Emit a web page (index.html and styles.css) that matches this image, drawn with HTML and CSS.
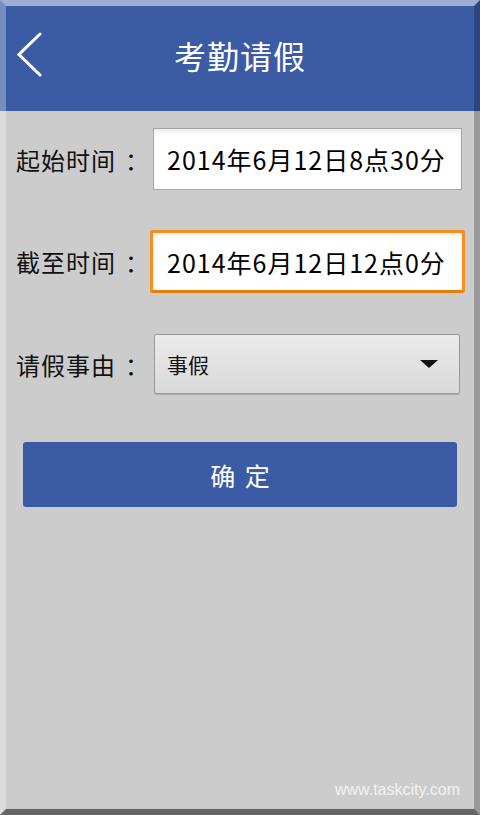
FILE: index.html
```html
<!DOCTYPE html>
<html lang="zh-CN">
<head>
<meta charset="utf-8">
<title>考勤请假</title>
<link rel="stylesheet" href="styles.css">
</head>
<body>
<div class="screen">
  <header class="header">
    <svg class="back" width="30" height="48" viewBox="0 0 30 48">
      <polyline points="23,3 2,23.5 23,44" fill="none" stroke="#fff" stroke-width="3" stroke-linecap="round" stroke-linejoin="miter"/>
    </svg>
    <h1 class="title">考勤请假</h1>
  </header>
  <main class="form">
    <div class="row row-start">
      <span class="label">起始时间<span class="colon">：</span></span>
      <div class="field field-plain">2014年6月12日8点30分</div>
    </div>
    <div class="row row-end">
      <span class="label">截至时间<span class="colon">：</span></span>
      <div class="field field-focus">2014年6月12日12点0分</div>
    </div>
    <div class="row row-reason">
      <span class="label">请假事由<span class="colon">：</span></span>
      <div class="select">
        <span class="select-text">事假</span>
        <span class="caret"></span>
      </div>
    </div>
    <button class="confirm">确 定</button>
  </main>
  <footer class="footer">www.taskcity.com</footer>
  <div class="frame"></div>
</div>
</body>
</html>
```
FILE: styles.css
```css
* { box-sizing: border-box; }
html, body { margin: 0; padding: 0; }
body {
  width: 480px;
  height: 815px;
  overflow: hidden;
  font-family: "Noto Sans CJK SC", "Noto Sans", sans-serif;
  background: #cccccc;
}
.screen {
  position: relative;
  width: 480px;
  height: 815px;
  background: #cccccc;
  display: flex;
  flex-direction: column;
}
.header {
  height: 111px;
  background: #3b5ca5;
  display: flex;
  align-items: center;
  justify-content: center;
  position: relative;
}
.back {
  position: absolute;
  left: 17px;
  top: 31px;
}
.title {
  margin: 0;
  color: #fff;
  font-size: 32px;
  font-weight: normal;
  letter-spacing: 1px;
  line-height: 1;
  padding-bottom: 2px;
}
.form {
  flex: 1;
  padding: 17px 0 0 0;
  display: flex;
  flex-direction: column;
}
.row {
  display: flex;
  align-items: center;
}
.label {
  width: 150px;
  padding-left: 16px;
  font-size: 24px;
  color: #111;
  white-space: nowrap;
  letter-spacing: 1px;
}
.colon {
  margin-left: 9px;
}
.field {
  background: #fff;
  font-size: 25px;
  color: #000;
  display: flex;
  align-items: center;
  white-space: nowrap;
  letter-spacing: 1px;
}
.row-start .label { width: 153px; }
.field-plain {
  width: 309px;
  height: 62px;
  border: 1px solid #a5a5a5;
  padding-left: 13px;
  box-shadow: inset 0 3px 4px rgba(0,0,0,0.07);
}
.row-end { margin-top: 40px; }
.row-end .label { width: 150px; }
.field-focus {
  width: 315px;
  height: 63px;
  border: 3px solid #f48f1c;
  border-bottom-color: #ec7c08;
  border-radius: 3px;
  padding-left: 14px;
  box-shadow: inset 0 3px 4px rgba(0,0,0,0.06);
}
.row-reason { margin-top: 41px; }
.row-reason .label { width: 154px; }
.select {
  width: 306px;
  height: 60px;
  border: 1px solid #9a9a9a;
  border-radius: 2px;
  background: linear-gradient(#ebebeb, #d9d9d9);
  box-shadow: 0 1px 1px rgba(0,0,0,0.15);
  display: flex;
  align-items: center;
  justify-content: space-between;
  padding: 0 21px 0 12px;
}
.select-text {
  font-size: 21px;
  color: #111;
}
.caret {
  width: 0;
  height: 0;
  border-left: 9px solid transparent;
  border-right: 9px solid transparent;
  border-top: 8px solid #111;
}
.confirm {
  margin: 48px 0 0 23px;
  width: 434px;
  height: 65px;
  background: #3b5ca5;
  border: none;
  border-radius: 3px;
  color: #fff;
  font-family: "Noto Sans CJK SC", "Noto Sans", sans-serif;
  font-size: 25px;
  letter-spacing: 2px;
  padding: 0 0 0 2px;
}
.footer {
  text-align: right;
  padding: 0 20px 16px 0;
  font-family: "Liberation Sans", Arial, sans-serif;
  font-size: 16px;
  color: #f2f2f2;
}
.frame {
  position: absolute;
  inset: 0;
  border-style: solid;
  border-width: 6px 6px 6px 6px;
  border-top-color: rgba(255,255,255,0.5);
  border-left-color: rgba(255,255,255,0.3);
  border-right-color: rgba(0,0,0,0.25);
  border-bottom-color: rgba(0,0,0,0.5);
  pointer-events: none;
}
```
